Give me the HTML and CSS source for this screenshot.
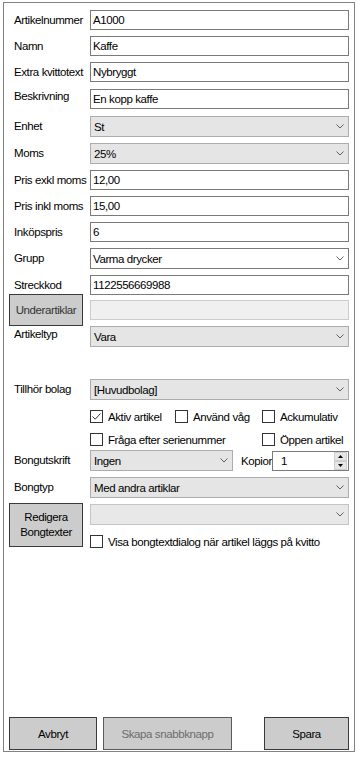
FILE: index.html
```html
<!DOCTYPE html>
<html lang="sv">
<head>
<meta charset="utf-8">
<title>Artikel</title>
<link rel="stylesheet" href="styles.css">
</head>
<body>
<div class="frame">
  <div class="form">
    <div class="lbl">Artikelnummer</div>
    <div class="tb">A1000</div>

    <div class="lbl">Namn</div>
    <div class="tb">Kaffe</div>

    <div class="lbl">Extra kvittotext</div>
    <div class="tb">Nybryggt</div>

    <div class="lbl lbl-up">Beskrivning</div>
    <div class="tb">En kopp kaffe</div>

    <div class="lbl lbl-cb">Enhet</div>
    <div class="cb"><span>St</span><svg class="chev" width="8" height="5" viewBox="0 0 8 5"><polyline points="0.5,0.5 4,4 7.5,0.5"/></svg></div>

    <div class="lbl lbl-cb">Moms</div>
    <div class="cb"><span>25%</span><svg class="chev" width="8" height="5" viewBox="0 0 8 5"><polyline points="0.5,0.5 4,4 7.5,0.5"/></svg></div>

    <div class="lbl">Pris exkl moms</div>
    <div class="tb">12,00</div>

    <div class="lbl">Pris inkl moms</div>
    <div class="tb">15,00</div>

    <div class="lbl">Inköpspris</div>
    <div class="tb">6</div>

    <div class="lbl lbl-cb">Grupp</div>
    <div class="cb cb-edit"><span>Varma drycker</span><svg class="chev" width="8" height="5" viewBox="0 0 8 5"><polyline points="0.5,0.5 4,4 7.5,0.5"/></svg></div>

    <div class="lbl">Streckkod</div>
    <div class="tb">1122556669988</div>

    <button class="btn btn-sub">Underartiklar</button>
    <div class="tb tb-dis"></div>

    <div class="lbl lbl-up2">Artikeltyp</div>
    <div class="cb"><span>Vara</span><svg class="chev" width="8" height="5" viewBox="0 0 8 5"><polyline points="0.5,0.5 4,4 7.5,0.5"/></svg></div>

    <div class="lbl lbl-cb">Tillhör bolag</div>
    <div class="cb"><span>[Huvudbolag]</span><svg class="chev" width="8" height="5" viewBox="0 0 8 5"><polyline points="0.5,0.5 4,4 7.5,0.5"/></svg></div>

    <div class="checks checks-1">
      <label class="chk w-aktiv"><span class="box"><svg width="11" height="11" viewBox="0 0 11 11"><polyline points="1.5,5.5 4.2,8.2 9.5,2.5"/></svg></span><span>Aktiv artikel</span></label>
      <label class="chk w-vag"><span class="box"></span><span>Använd våg</span></label>
      <label class="chk"><span class="box"></span><span>Ackumulativ</span></label>
    </div>

    <div class="checks checks-2">
      <label class="chk"><span class="box"></span><span>Fråga efter serienummer</span></label>
      <label class="chk chk-right"><span class="box"></span><span>Öppen artikel</span></label>
    </div>

    <div class="lbl lbl-cb">Bongutskrift</div>
    <div class="bong-row">
      <div class="cb cb-short"><span>Ingen</span><svg class="chev" width="8" height="5" viewBox="0 0 8 5"><polyline points="0.5,0.5 4,4 7.5,0.5"/></svg></div>
      <span class="kopior">Kopior</span>
      <div class="spin">
        <span class="spin-val">1</span>
        <span class="spin-btns">
          <span class="spin-up"><svg width="5" height="3" viewBox="0 0 5 3"><polygon points="0,3 2.5,0 5,3"/></svg></span>
          <span class="spin-down"><svg width="5" height="3" viewBox="0 0 5 3"><polygon points="0,0 5,0 2.5,3"/></svg></span>
        </span>
      </div>
    </div>

    <div class="lbl lbl-cb">Bongtyp</div>
    <div class="cb"><span>Med andra artiklar</span><svg class="chev" width="8" height="5" viewBox="0 0 8 5"><polyline points="0.5,0.5 4,4 7.5,0.5"/></svg></div>

    <button class="btn btn-redig">Redigera<br>Bongtexter</button>
    <div class="cb cb-dis"><span></span><svg class="chev" width="8" height="5" viewBox="0 0 8 5"><polyline points="0.5,0.5 4,4 7.5,0.5"/></svg></div>

    <label class="chk chk-visa"><span class="box"></span><span>Visa bongtextdialog när artikel läggs på kvitto</span></label>
  </div>

  <div class="actions">
    <button class="btn btn-cancel">Avbryt</button>
    <button class="btn btn-quick" disabled>Skapa snabbknapp</button>
    <button class="btn btn-save">Spara</button>
  </div>
</div>
</body>
</html>
```

FILE: styles.css
```css
* { box-sizing: border-box; }

html, body {
  margin: 0;
  background: #ffffff;
}

body {
  font-family: "Liberation Sans", Arial, sans-serif;
  font-size: 11.5px;
  color: #000;
  letter-spacing: -0.4px;
}

.frame {
  width: 352px;
  height: 750px;
  margin: 2px 0 0 3px;
  border: 1px solid #828282;
  display: flex;
  flex-direction: column;
  padding: 7px 0 1px 0;
}

.form {
  display: grid;
  grid-template-columns: 76px 259px;
  grid-template-rows: 26px 26px 27px 27px 27px 27px 26px 26px 26px 27px 25px 26px 53px 31px 23px 17px 27px 27px 31px 20px;
  padding-left: 10px;
  align-items: start;
}

.lbl {
  line-height: 20px;
  height: 20px;
  white-space: nowrap;
}
.lbl-cb { line-height: 21px; height: 21px; }
.lbl-up { margin-top: -3px; line-height: 20px; }
.lbl-up2 { margin-top: -2px; }

.tb {
  height: 20px;
  border: 1px solid #7a7a7a;
  background: #fff;
  padding: 0 2px;
  display: flex;
  align-items: center;
  white-space: nowrap;
}
.tb-dis {
  background: #f0f0f0;
  border-color: #cccccc;
}

.cb {
  height: 21px;
  border: 1px solid #adadad;
  background: #e5e5e5;
  padding: 0 4px 0 3px;
  display: flex;
  align-items: center;
  justify-content: space-between;
  white-space: nowrap;
}
.cb-edit {
  background: #fff;
  border-color: #7a7a7a;
  padding-left: 2px;
}
.cb-dis {
  background: #e8e8e8;
  border-color: #c4c4c4;
}
.chev polyline {
  fill: none;
  stroke: #606060;
  stroke-width: 1;
}

.btn {
  font: inherit;
  letter-spacing: inherit;
  color: #000;
  background: #cccccc;
  border: 1px solid #3a3a3a;
  border-radius: 0;
  padding: 0;
  margin: 0;
  text-align: center;
}
.btn-sub {
  grid-column: 1;
  width: 74px;
  height: 32px;
  margin-left: -5px;
  margin-top: -6px;
  color: #333;
}
.btn-redig {
  grid-row: span 2;
  width: 74px;
  height: 44px;
  margin-left: -5px;
  margin-top: -1px;
  line-height: 15px;
}

.checks {
  grid-column: 2;
  display: flex;
  align-items: center;
}
.checks-2 { justify-content: space-between; }

.chk {
  display: flex;
  align-items: center;
  gap: 5px;
  height: 13px;
  white-space: nowrap;
}
.w-aktiv { width: 85px; }
.w-vag { width: 87px; }
.chk-right { width: 87px; }
.chk-visa { grid-column: 2; margin-top: 0; }

.box {
  width: 13px;
  height: 13px;
  border: 1px solid #333333;
  background: #fff;
  display: flex;
  align-items: center;
  justify-content: center;
  flex: none;
}
.box polyline {
  fill: none;
  stroke: #333;
  stroke-width: 1;
}

.bong-row {
  display: flex;
  align-items: center;
}
.cb-short { width: 143px; }
.kopior { margin-left: 8px; }
.spin {
  margin-left: auto;
  width: 77px;
  height: 20px;
  border: 1px solid #7a7a7a;
  background: #fff;
  display: flex;
  align-items: center;
  padding-left: 8px;
}
.spin-val { flex: 1; }
.spin-btns {
  width: 13px;
  height: 18px;
  display: flex;
  flex-direction: column;
  margin-right: 1px;
}
.spin-up, .spin-down {
  flex: 1;
  background: #e6e6e6;
  border: 1px solid #cfcfcf;
  display: flex;
  align-items: center;
  justify-content: center;
}
.spin-btns polygon { fill: #000; }

.actions {
  margin-top: auto;
  display: flex;
  padding: 0 5px;
}
.actions .btn { height: 33px; }
.btn-cancel { width: 88px; }
.btn-quick { width: 129px; margin-left: 6px; color: #6d6d6d; border-color: #5a5a5a; }
.btn-save { width: 85px; margin-left: auto; }
```
